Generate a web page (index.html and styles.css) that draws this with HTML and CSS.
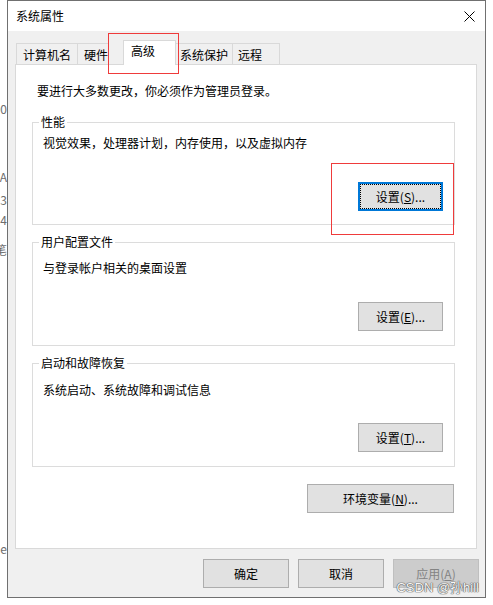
FILE: index.html
```html
<!DOCTYPE html>
<html lang="zh-CN">
<head>
  <meta charset="UTF-8">
  <title>系统属性</title>
  <link rel="stylesheet" href="styles.css">
</head>
<body>

  <div class="desktop">
    <!-- the window behind, mostly covered -->
    <div class="behind">
      <div class="behind-line"><span>300</span></div>
      <div class="behind-line"><span>A</span></div>
      <div class="behind-line"><span>3</span></div>
      <div class="behind-line"><span>4</span></div>
      <div class="behind-line"><span>笔</span></div>
      <div class="behind-line"><span>ie</span></div>
    </div>

    <div class="window">
      <div class="titlebar">
        <span class="title">系统属性</span>
        <span class="close">
          <svg width="11" height="11" viewBox="0 0 11 11">
            <path d="M0.5 0.5 L10.5 10.5 M10.5 0.5 L0.5 10.5" stroke="#000" stroke-width="1" fill="none"/>
          </svg>
        </span>
      </div>

      <div class="tabs">
        <div class="tab tab-name">计算机名</div>
        <div class="tab tab-hw">硬件</div>
        <div class="tab tab-adv active">高级</div>
        <div class="tab tab-prot">系统保护</div>
        <div class="tab tab-remote">远程</div>
      </div>

      <div class="panel">
        <p class="intro">要进行大多数更改，你必须作为管理员登录。</p>

        <div class="group group-perf">
          <span class="group-title">性能</span>
          <p class="group-desc">视觉效果，处理器计划，内存使用，以及虚拟内存</p>
          <button class="btn btn-focus"><span class="focus-ring">设置(<u>S</u>)...</span></button>
        </div>

        <div class="group group-profile">
          <span class="group-title">用户配置文件</span>
          <p class="group-desc">与登录帐户相关的桌面设置</p>
          <button class="btn">设置(<u>E</u>)...</button>
        </div>

        <div class="group group-startup">
          <span class="group-title">启动和故障恢复</span>
          <p class="group-desc">系统启动、系统故障和调试信息</p>
          <button class="btn">设置(<u>T</u>)...</button>
        </div>

        <button class="btn btn-wide">环境变量(<u>N</u>)...</button>
      </div>

      <div class="footer">
        <button class="btn btn-footer">确定</button>
        <button class="btn btn-footer">取消</button>
        <button class="btn btn-footer" disabled>应用(<u>A</u>)</button>
      </div>

      <!-- annotation boxes and watermark drawn over the screenshot -->
      <div class="mark mark-tabs"></div>
      <div class="mark mark-perf"></div>
      <div class="watermark">CSDN @孙hill</div>
    </div>
  </div>

</body>
</html>
```

FILE: styles.css
```css
body {
  margin: 0;
  background-color: #fff;
  font-family: "Noto Sans CJK SC", "Noto Sans", sans-serif;
  font-size: 12px;
  color: #000;
}
p {
  margin: 0;
}
.desktop {
  display: flex;
  width: 493px;
  height: 605px;
  overflow: hidden;
}

/* window behind */
.behind {
  width: 7px;
  overflow: hidden;
  padding-top: 101px;
  color: #6d6d6d;
}
.behind-line {
  display: flex;
  justify-content: flex-end;
  white-space: nowrap;
  line-height: 16px;
  height: 16px;
}
.behind-line:nth-child(2) { margin-top: 52px; }
.behind-line:nth-child(3) { margin-top: 7px; }
.behind-line:nth-child(4) { margin-top: 4px; }
.behind-line:nth-child(5) { margin-top: 14px; }
.behind-line:nth-child(6) { margin-top: 283px; }

/* dialog */
.window {
  position: relative;
  width: 479px;
  height: 598px;
  box-sizing: border-box;
  border: 1px solid #707070;
  background-color: #f0f0f0;
  display: flex;
  flex-direction: column;
}
.titlebar {
  height: 30px;
  background-color: #fff;
  display: flex;
  align-items: center;
  justify-content: space-between;
}
.title {
  padding-left: 8px;
  line-height: 16px;
}
.close {
  width: 32px;
  height: 30px;
  display: flex;
  align-items: center;
  justify-content: center;
}
.close svg {
  display: block;
}

/* tabs */
.tabs {
  display: flex;
  align-items: flex-end;
  padding: 9px 0 0 8px;
  margin-bottom: -1px;
}
.tab {
  border: 1px solid #d9d9d9;
  border-bottom: none;
  background-color: #f0f0f0;
  line-height: 16px;
  padding: 3px 6px 2px;
  margin-left: -1px;
  white-space: nowrap;
}
.tab-name {
  margin-left: 0;
}
.tab-hw {
  padding-right: 0;
}
.tab-prot {
  padding-left: 4px;
  padding-right: 4px;
}
.tab-remote {
  padding-left: 5px;
  padding-right: 17px;
}
.tab.active {
  position: relative;
  z-index: 1;
  background-color: #fff;
  margin-left: 14px;
  padding: 2px 20px 6px 7px;
}

/* page of the active tab */
.panel {
  height: 485px;
  box-sizing: border-box;
  margin: 0 8px 0 7px;
  background-color: #fff;
  border: 1px solid #d9d9d9;
  padding-top: 18px;
  display: flex;
  flex-direction: column;
}
.intro {
  line-height: 16px;
  padding-left: 21px;
}
.group {
  height: 104px;
  box-sizing: border-box;
  margin: 17px 21px 0 16px;
  border: 1px solid #dcdcdc;
  display: flex;
  flex-direction: column;
}
.group-perf {
  height: 103px;
  margin-top: 23px;
}
.group-title {
  align-self: flex-start;
  margin: -9px 0 0 6px;
  padding: 0 2px;
  background-color: #fff;
  line-height: 16px;
}
.group-desc {
  line-height: 16px;
  padding-left: 10px;
  margin-top: 10px;
}
.group-perf .group-desc {
  margin-top: 5px;
}
.group-startup .group-desc {
  margin-top: 11px;
}
.group .btn {
  margin: auto 11px 14px 0;
  align-self: flex-end;
}
.group-perf .btn {
  margin-bottom: 13px;
}

/* buttons */
.btn {
  width: 85px;
  height: 29px;
  box-sizing: border-box;
  padding: 0;
  background-color: #e1e1e1;
  border: 1px solid #adadad;
  font-family: inherit;
  font-size: 12px;
  color: #000;
  line-height: 16px;
  text-align: center;
}
.btn u {
  text-decoration-thickness: 1px;
  text-underline-offset: 1px;
}
.btn-focus {
  border: 2px solid #0078d7;
  display: flex;
}
.focus-ring {
  flex: 1;
  border: 1px dotted #000;
  display: flex;
  align-items: center;
  justify-content: center;
}
.btn-wide {
  width: 147px;
  align-self: flex-end;
  margin: 17px 22px 0 0;
}
.footer {
  display: flex;
  justify-content: flex-end;
  gap: 9px;
  padding: 10px 6px 0 0;
}
.btn-footer {
  width: 86px;
}
.btn:disabled {
  background-color: #cccccc;
  border-color: #bfbfbf;
  color: #838383;
}

/* red boxes and watermark */
.mark {
  position: absolute;
  box-sizing: border-box;
  border: 1px solid #ef3b3b;
  z-index: 2;
}
.mark-tabs {
  left: 100px;
  top: 32px;
  width: 71px;
  height: 41px;
}
.mark-perf {
  left: 323px;
  top: 162px;
  width: 123px;
  height: 72px;
}
.watermark {
  position: absolute;
  right: 6px;
  bottom: 2px;
  z-index: 2;
  font-family: "Liberation Sans", "Noto Sans CJK SC", sans-serif;
  font-size: 13px;
  line-height: 15px;
  color: #f6f6f6;
  text-shadow: 0 0 1px #555, 0 0 1px #555, 0 0 1px #555;
  white-space: nowrap;
}
```
